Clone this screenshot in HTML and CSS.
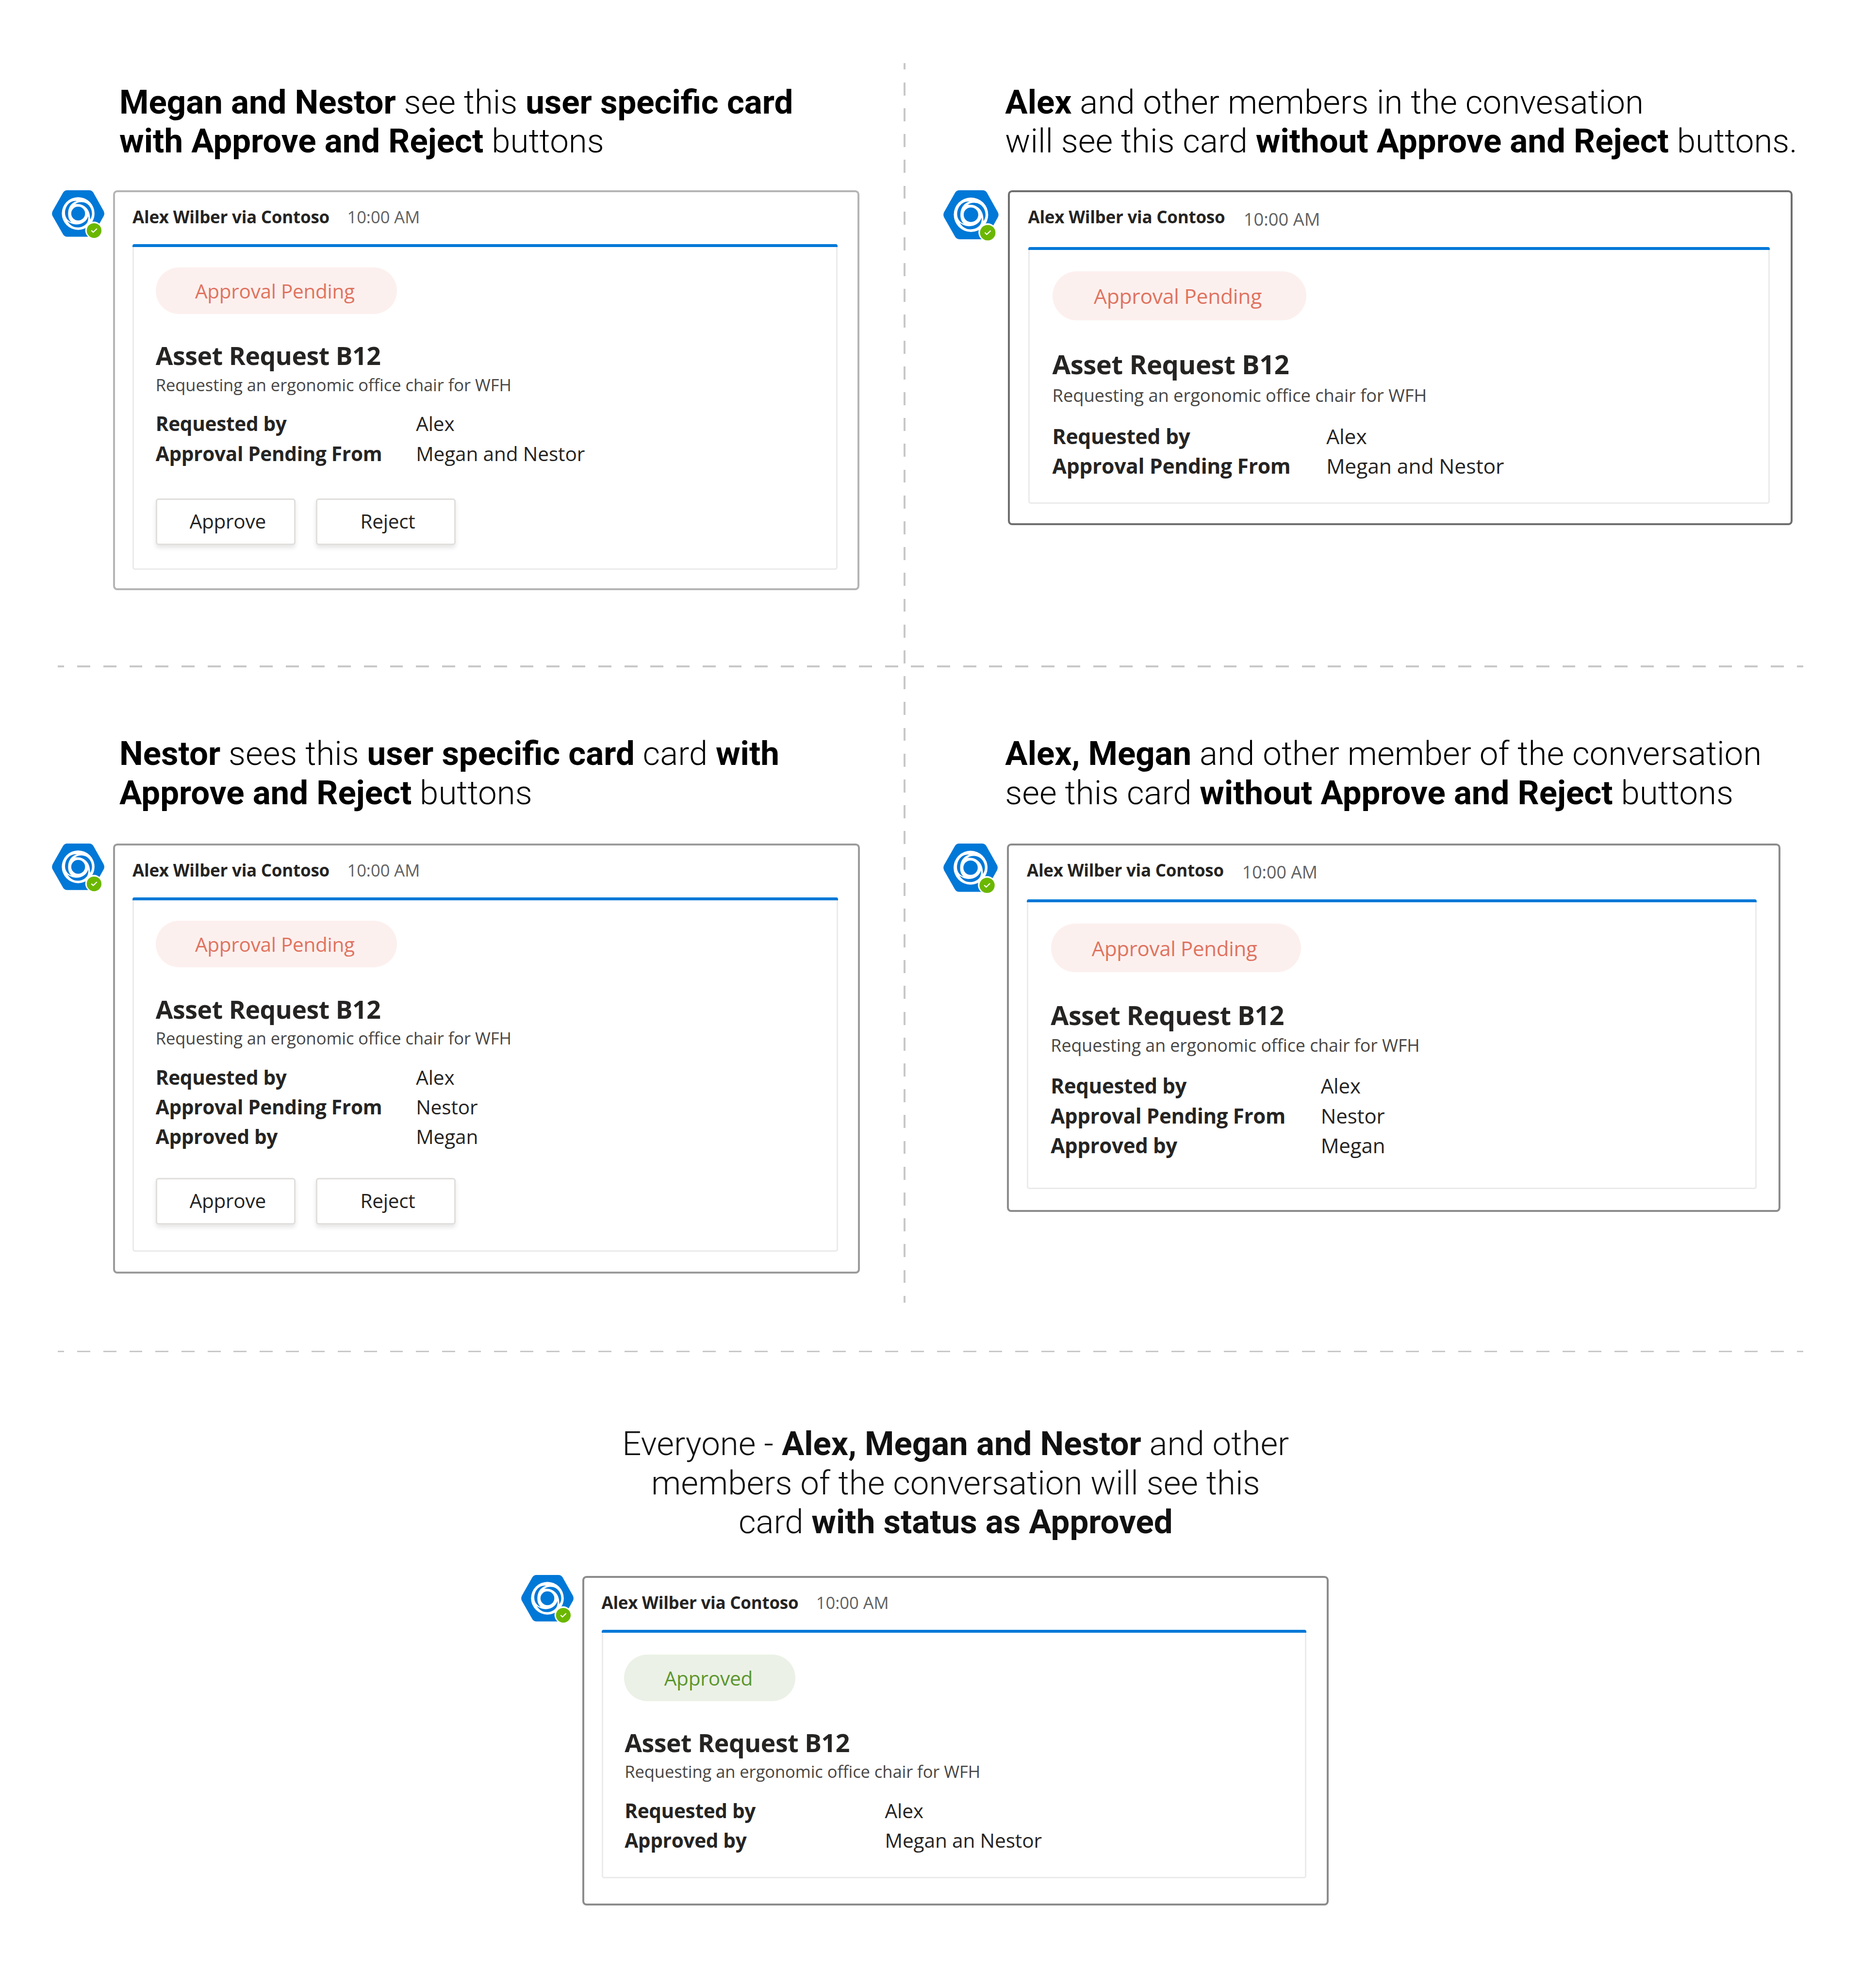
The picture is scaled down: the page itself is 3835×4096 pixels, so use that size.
FILE: index.html
```
<!DOCTYPE html>
<html lang="en">
<head>
<meta charset="utf-8">
<title>Approval cards</title>
<link rel="stylesheet" href="styles.css">
</head>
<body>
<svg class="defs" aria-hidden="true">
  <symbol id="avatar" viewBox="0 0 113 100" overflow="visible">
    <path fill="#0078d7" d="M33 0H80Q86 0 89 5L111.2 44.5Q114 50 111.2 55.5L89 95Q86 100 80 100H33Q27 100 24 95L1.5 55.5Q-1.2 50 1.5 44.5L24 5Q27 0 33 0Z"/>
    <circle cx="56.4" cy="50" r="35.2" fill="#fff"/>
    <g transform="scale(.3167) translate(-9 -24)" fill="#0078d7">
      <path d="M177 97C128 92 98 135 98 178C98 210 118 232 141 241C122 222 118 200 119 176C121 135 143 108 177 97Z"/>
      <path d="M166 118C180 107 195 104 212 105C252 106 281 142 281 182C281 198 276 211 268 223C268 190 262 165 245 146C225 124 198 114 166 118Z"/>
      <path d="M114 233C132 262 155 276 182 276C212 276 233 264 246 247C254 236 257 218 256 200C244 236 212 256 174 256C150 255 130 246 114 233Z"/>
      <circle cx="187" cy="182" r="47"/>
    </g>
    <circle cx="90.2" cy="86" r="18.6" fill="#fff"/>
    <circle cx="90.6" cy="86.6" r="15.8" fill="#6bb700"/>
    <path d="M85.4 87L88.7 90.2L96 83.2" fill="none" stroke="#fff" stroke-width="2.3" stroke-linecap="round" stroke-linejoin="round"/>
  </symbol>
</svg>
<main class="board">
  <section class="panel panel-top panel-left">
    <h2 class="caption"><b>Megan and Nestor</b> see this <b>user specific card<br>with Approve and Reject</b> buttons</h2>
    <div class="message message-actions">
      <svg class="avatar"><use href="#avatar"/></svg>
      <article class="card">
        <header class="card-head"><span class="name">Alex Wilber via Contoso</span><time class="time">10:00 AM</time></header>
        <div class="body">
          <span class="status">Approval Pending</span>
          <h3 class="title">Asset Request B12</h3>
          <p class="subtitle">Requesting an ergonomic office chair for WFH</p>
          <dl class="facts">
            <dt>Requested by</dt><dd>Alex</dd>
            <dt>Approval Pending From</dt><dd>Megan and Nestor</dd>
          </dl>
          <div class="actions"><button class="btn">Approve</button><button class="btn">Reject</button></div>
        </div>
      </article>
    </div>
  </section>
  <section class="panel panel-top panel-right">
    <h2 class="caption"><b>Alex</b> and other members in the convesation<br>will see this card <b>without Approve and Reject</b> buttons.</h2>
    <div class="message message-readonly">
      <svg class="avatar"><use href="#avatar"/></svg>
      <article class="card">
        <header class="card-head"><span class="name">Alex Wilber via Contoso</span><time class="time">10:00 AM</time></header>
        <div class="body">
          <span class="status">Approval Pending</span>
          <h3 class="title">Asset Request B12</h3>
          <p class="subtitle">Requesting an ergonomic office chair for WFH</p>
          <dl class="facts">
            <dt>Requested by</dt><dd>Alex</dd>
            <dt>Approval Pending From</dt><dd>Megan and Nestor</dd>
          </dl>
        </div>
      </article>
    </div>
  </section>
  <div class="rule rule-first"></div>
  <section class="panel panel-middle panel-left">
    <h2 class="caption"><b>Nestor</b> sees this <b>user specific card</b> card <b>with<br>Approve and Reject</b> buttons</h2>
    <div class="message message-partial-actions">
      <svg class="avatar"><use href="#avatar"/></svg>
      <article class="card">
        <header class="card-head"><span class="name">Alex Wilber via Contoso</span><time class="time">10:00 AM</time></header>
        <div class="body">
          <span class="status">Approval Pending</span>
          <h3 class="title">Asset Request B12</h3>
          <p class="subtitle">Requesting an ergonomic office chair for WFH</p>
          <dl class="facts">
            <dt>Requested by</dt><dd>Alex</dd>
            <dt>Approval Pending From</dt><dd>Nestor</dd>
            <dt>Approved by</dt><dd>Megan</dd>
          </dl>
          <div class="actions"><button class="btn">Approve</button><button class="btn">Reject</button></div>
        </div>
      </article>
    </div>
  </section>
  <section class="panel panel-middle panel-right">
    <h2 class="caption"><b>Alex, Megan</b> and other member of the conversation<br>see this card <b>without Approve and Reject</b> buttons</h2>
    <div class="message message-partial">
      <svg class="avatar"><use href="#avatar"/></svg>
      <article class="card">
        <header class="card-head"><span class="name">Alex Wilber via Contoso</span><time class="time">10:00 AM</time></header>
        <div class="body">
          <span class="status">Approval Pending</span>
          <h3 class="title">Asset Request B12</h3>
          <p class="subtitle">Requesting an ergonomic office chair for WFH</p>
          <dl class="facts">
            <dt>Requested by</dt><dd>Alex</dd>
            <dt>Approval Pending From</dt><dd>Nestor</dd>
            <dt>Approved by</dt><dd>Megan</dd>
          </dl>
        </div>
      </article>
    </div>
  </section>
  <div class="rule-vertical"></div>
  <div class="rule rule-second"></div>
  <section class="panel panel-final">
    <h2 class="caption">Everyone - <b>Alex, Megan and Nestor</b> and other<br>members of the conversation will see this<br>card <b>with status as Approved</b></h2>
    <div class="message message-approved">
      <svg class="avatar"><use href="#avatar"/></svg>
      <article class="card">
        <header class="card-head"><span class="name">Alex Wilber via Contoso</span><time class="time">10:00 AM</time></header>
        <div class="body">
          <span class="status status-approved">Approved</span>
          <h3 class="title">Asset Request B12</h3>
          <p class="subtitle">Requesting an ergonomic office chair for WFH</p>
          <dl class="facts">
            <dt>Requested by</dt><dd>Alex</dd>
            <dt>Approved by</dt><dd>Megan an Nestor</dd>
          </dl>
        </div>
      </article>
    </div>
  </section>
</main>
</body>
</html>
```
FILE: styles.css
```
:root {
  --u: 0.95875px;
  --dash: #c8c8c8;
}

* { box-sizing: border-box; }

body {
  margin: 0;
  background: #fff;
  font-family: "Open Sans", "Noto Sans", sans-serif;
  color: #252423;
}

h2, h3, p, dl, dd { margin: 0; }

.defs { display: none; }

.board {
  display: grid;
  width: 3835px;
  height: 4096px;
  overflow: hidden;
  grid-template-columns: calc(1942 * var(--u)) calc(4 * var(--u)) 1fr;
  grid-template-rows: calc(1430 * var(--u)) calc(4 * var(--u)) calc(1468.4 * var(--u)) calc(4 * var(--u)) 1fr;
}

/* dividers */
.rule {
  grid-column: 1 / -1;
  margin: 0 calc(124 * var(--u));
  background: repeating-linear-gradient(90deg,
    var(--dash) 0 calc(14 * var(--u)),
    transparent calc(14 * var(--u)) calc(42 * var(--u)),
    var(--dash) calc(42 * var(--u)) calc(56 * var(--u)));
}
.rule-first { grid-row: 2; }
.rule-second { grid-row: 4; }
.rule-vertical {
  grid-column: 2;
  grid-row: 1 / 4;
  height: calc(2664 * var(--u));
  margin-top: calc(136 * var(--u));
  background: repeating-linear-gradient(180deg,
    var(--dash) 0 calc(14 * var(--u)),
    transparent calc(14 * var(--u)) calc(41.48 * var(--u)),
    var(--dash) calc(41.48 * var(--u)) calc(55.48 * var(--u)));
}

/* panels */
.panel { display: flex; flex-direction: column; }
.panel-top { grid-row: 1; padding-top: calc(178 * var(--u)); }
.panel-middle { grid-row: 3; padding-top: calc(144.5 * var(--u)); }
.panel-left { grid-column: 1; padding-left: calc(112 * var(--u)); }
.panel-right { grid-column: 3; padding-left: calc(82 * var(--u)); }
.panel-final { grid-row: 5; grid-column: 1 / -1; padding: calc(155.2 * var(--u)) 0 0 calc(1120 * var(--u)); }

.caption {
  font: 300 calc(72 * var(--u)) / calc(84 * var(--u)) Roboto, sans-serif;
  color: #000;
  white-space: nowrap;
}
.caption b { font-weight: 700; }
.panel-left .caption { margin-left: calc(144.7 * var(--u)); }
.panel-right .caption { margin-left: calc(132.5 * var(--u)); }
.panel-top .caption { margin-bottom: calc(62.4 * var(--u)); }
.panel-middle .caption { margin-bottom: calc(66 * var(--u)); }
.panel-final .caption {
  width: calc(1868 * var(--u));
  margin-bottom: calc(70.8 * var(--u));
  color: #111;
  text-align: center;
}

/* chat message: avatar and card, sized by --k */
.message {
  --k: 1;
  --s: calc(var(--u) * var(--k));
  display: flex;
  align-items: flex-start;
  gap: calc(18.4 * var(--s));
}
.avatar {
  flex: none;
  width: calc(113 * var(--s));
  height: calc(100 * var(--s));
  overflow: visible;
}
.card {
  width: calc(1604 * var(--u));
  padding: 0 calc(43.3 * var(--u)) calc(39.4 * var(--u)) calc(37.3 * var(--s));
  border: 4px solid #b5b5b5;
  border-radius: calc(9 * var(--u));
}
.card-head {
  display: flex;
  align-items: flex-start;
  gap: calc(38 * var(--s));
  height: calc(115.9 * var(--s) - 4 * var(--u));
  padding-top: calc(28.9 * var(--u));
  line-height: calc(50 * var(--u));
  white-space: nowrap;
}
.name {
  font-size: calc(36.5 * var(--u));
  font-weight: 700;
  letter-spacing: calc(-0.25 * var(--u));
}
.time {
  margin-top: calc(90 * (var(--s) - var(--u)));
  font-size: calc(36 * var(--s));
  color: #616161;
}
.body {
  position: relative;
  height: calc(700 * var(--u));
  padding: calc(50.4 * var(--s)) 0 0 calc(46.6 * var(--s));
  border: 3px solid #ebebeb;
  border-top: 0;
  border-radius: calc(5 * var(--u));
}
.body::before {
  content: "";
  position: absolute;
  top: 0;
  left: -3px;
  right: -3px;
  height: calc(6.4 * var(--u));
  border-radius: calc(4 * var(--u)) calc(4 * var(--u)) 0 0;
  background: #0078d7;
}
.status {
  display: block;
  width: calc(518 * var(--s));
  height: calc(100 * var(--s));
  margin-left: calc(0.4 * var(--s));
  padding: calc(0.8 * var(--s)) 0 0 calc(84.4 * var(--s));
  border-radius: calc(50 * var(--s));
  background: #fcf0ee;
  color: #df7360;
  font-size: calc(42.3 * var(--s));
  letter-spacing: calc(-0.33 * var(--s));
  line-height: calc(100 * var(--s));
}
.status-approved {
  width: calc(368 * var(--s));
  margin-left: calc(-1 * var(--s));
  padding-left: calc(86 * var(--s));
  background: #ebf1e6;
  color: #5b962d;
  letter-spacing: calc(-0.2 * var(--s));
}
.title {
  margin-top: calc(54.6 * var(--s));
  font-size: calc(54 * var(--s));
  letter-spacing: calc(-0.48 * var(--s));
  line-height: calc(70 * var(--s));
}
.subtitle {
  margin-top: calc(4.6 * var(--s));
  color: #484644;
  font-size: calc(36 * var(--s));
  letter-spacing: calc(-0.06 * var(--s));
  line-height: calc(46 * var(--s));
}
.facts {
  display: grid;
  grid-template-columns: calc(559.5 * var(--s)) auto;
  grid-auto-rows: calc(64 * var(--u));
  margin-top: calc(60.6 * var(--s) - 32 * var(--u));
  font-size: calc(42.3 * var(--s));
  line-height: calc(64 * var(--u));
}
.facts dt { font-weight: 700; letter-spacing: calc(-0.33 * var(--s)); }
.facts dd { letter-spacing: calc(-0.13 * var(--s)); }
.actions {
  display: flex;
  gap: calc(44 * var(--u));
  margin: calc(65 * var(--u)) 0 0 calc(0.4 * var(--u));
}
.btn {
  width: calc(300 * var(--u));
  height: calc(100 * var(--u));
  padding: 0 0 calc(2.4 * var(--u)) calc(9 * var(--u));
  border: 3px solid #e1dfdd;
  border-radius: calc(6 * var(--u));
  background: #fff;
  box-shadow: 0 calc(6 * var(--u)) calc(10 * var(--u)) rgba(0, 0, 0, 0.1);
  color: #252423;
  font: 400 calc(42.3 * var(--u)) / 1 "Open Sans", "Noto Sans", sans-serif;
  letter-spacing: calc(-0.3 * var(--u));
}

/* per-message dimensions */
.message-readonly { --k: 1.0525; }
.message-readonly .card {
  width: calc(1687 * var(--u));
  padding-right: calc(45.5 * var(--u));
  padding-bottom: calc(42 * var(--u));
  border-color: #6f6f6f;
}
.message-readonly .body { height: calc(552 * var(--u)); }

.message-partial-actions .card { width: calc(1605 * var(--u)); padding-bottom: calc(43.7 * var(--u)); border-color: #9b9b9b; }
.message-partial-actions .body { height: calc(761 * var(--u)); }
.message-partial-actions .actions { margin-top: calc(57 * var(--u)); }

.message-partial { --k: 1.037; }
.message-partial .card {
  width: calc(1663 * var(--u));
  padding-right: calc(47 * var(--u));
  padding-bottom: calc(45.2 * var(--u));
  border-color: #8c8c8c;
}
.message-partial .body { height: calc(622.5 * var(--u)); }

.message-approved .card { margin-top: calc(2 * var(--u)); padding-bottom: calc(54 * var(--u)); border-color: #8c8c8c; }
.message-approved .body { height: calc(534.5 * var(--u)); padding-top: calc(53 * var(--u)); }
```
